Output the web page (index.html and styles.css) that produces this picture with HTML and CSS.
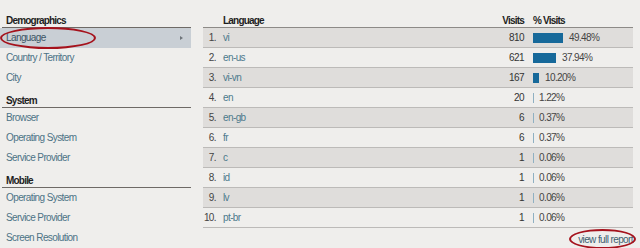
FILE: index.html
```html
<!DOCTYPE html>
<html lang="en">
<head>
  <meta charset="UTF-8">
  <meta name="viewport" content="width=device-width, initial-scale=1.0">
  <title>Audience Technology</title>
  <link rel="stylesheet" href="styles.css">
</head>
<body>
  <div class="page">
    <div class="sidebar">
      <div class="group-title">Demographics</div>
      <div class="nav-item active">
        Language
        <span class="arrow"></span>
        <span class="circle circle-nav"></span>
      </div>
      <div class="nav-item">Country / Territory</div>
      <div class="nav-item">City</div>

      <div class="group-title">System</div>
      <div class="nav-item">Browser</div>
      <div class="nav-item">Operating System</div>
      <div class="nav-item">Service Provider</div>

      <div class="group-title">Mobile</div>
      <div class="nav-item">Operating System</div>
      <div class="nav-item">Service Provider</div>
      <div class="nav-item">Screen Resolution</div>
    </div>

    <div class="report">
      <div class="row head">
        <span class="num"></span>
        <span class="lang">Language</span>
        <span class="visits">Visits</span>
        <span class="pct">% Visits</span>
      </div>
      <div class="row">
        <span class="num">1.</span><span class="lang">vi</span><span class="visits">810</span>
        <span class="pct"><span class="bar" style="width: 30px"></span>49.48%</span>
      </div>
      <div class="row">
        <span class="num">2.</span><span class="lang">en-us</span><span class="visits">621</span>
        <span class="pct"><span class="bar" style="width: 23px"></span>37.94%</span>
      </div>
      <div class="row">
        <span class="num">3.</span><span class="lang">vi-vn</span><span class="visits">167</span>
        <span class="pct"><span class="bar" style="width: 6px"></span>10.20%</span>
      </div>
      <div class="row">
        <span class="num">4.</span><span class="lang">en</span><span class="visits">20</span>
        <span class="pct"><span class="bar thin"></span>1.22%</span>
      </div>
      <div class="row">
        <span class="num">5.</span><span class="lang">en-gb</span><span class="visits">6</span>
        <span class="pct"><span class="bar thin"></span>0.37%</span>
      </div>
      <div class="row">
        <span class="num">6.</span><span class="lang">fr</span><span class="visits">6</span>
        <span class="pct"><span class="bar thin"></span>0.37%</span>
      </div>
      <div class="row">
        <span class="num">7.</span><span class="lang">c</span><span class="visits">1</span>
        <span class="pct"><span class="bar thin"></span>0.06%</span>
      </div>
      <div class="row">
        <span class="num">8.</span><span class="lang">id</span><span class="visits">1</span>
        <span class="pct"><span class="bar thin"></span>0.06%</span>
      </div>
      <div class="row">
        <span class="num">9.</span><span class="lang">lv</span><span class="visits">1</span>
        <span class="pct"><span class="bar thin"></span>0.06%</span>
      </div>
      <div class="row">
        <span class="num">10.</span><span class="lang">pt-br</span><span class="visits">1</span>
        <span class="pct"><span class="bar thin"></span>0.06%</span>
      </div>

      <div class="report-footer">
        <span class="full-link">
          view full report
          <span class="circle circle-link"></span>
        </span>
      </div>
    </div>
  </div>
</body>
</html>
```

FILE: styles.css
```css
body {
  margin: 0;
  background-color: #efeeec;
  font-family: 'Liberation Sans', Arial, sans-serif;
  font-size: 10px;
  letter-spacing: -0.6px;
  color: #333;
}

.page {
  display: flex;
  padding-top: 8px;
}

.sidebar {
  width: 191px;
  flex-shrink: 0;
}

.group-title {
  margin-left: 2px;
  padding: 6px 0 0 4px;
  line-height: 13px;
  font-weight: bold;
  letter-spacing: -0.8px;
  color: #1e1e1e;
  border-bottom: 1px solid #6e6a66;
}

.nav-item {
  position: relative;
  height: 20px;
  line-height: 20px;
  padding-left: 6px;
  color: #4d7386;
}

.nav-item.active {
  background-color: #c9cfd5;
  color: #3b5566;
}

.arrow {
  position: absolute;
  left: 180px;
  top: 8px;
  border-left: 3px solid #6d747a;
  border-top: 2.5px solid transparent;
  border-bottom: 2.5px solid transparent;
}

.circle {
  position: absolute;
  border: 2px solid #a5121c;
  border-radius: 50%;
}

.circle-nav {
  left: 0;
  top: -1px;
  width: 92px;
  height: 18px;
}

.report {
  margin-left: 12px;
  width: 430px;
}

.row {
  display: flex;
  height: 19px;
  line-height: 19px;
  border-bottom: 1px solid #bcbab8;
}

.row:nth-child(even) {
  background-color: #dfdddb;
}

.row.head {
  height: 13px;
  padding-top: 6px;
  line-height: 13px;
  font-weight: bold;
  letter-spacing: -0.8px;
  color: #1e1e1e;
  border-bottom-color: #8d8a87;
}

.num {
  width: 13px;
  text-align: right;
  color: #444;
}

.lang {
  flex: 1;
  padding-left: 7px;
  color: #4d7a8c;
}

.head .lang {
  color: #1e1e1e;
}

.visits {
  width: 44px;
  text-align: right;
}

.pct {
  width: 100px;
  padding-left: 9px;
  display: flex;
  align-items: center;
  color: #444;
}

.head .pct {
  color: #1e1e1e;
}

.bar {
  display: inline-block;
  height: 10px;
  margin-right: 6px;
  background-color: #17699a;
}

.bar.thin {
  width: 1px;
  background-color: #8fb0c2;
  margin-right: 5px;
}

.report-footer {
  display: flex;
  justify-content: flex-end;
  padding-top: 5px;
  line-height: 13px;
}

.full-link {
  position: relative;
  color: #3f5f70;
}

.circle-link {
  left: -9px;
  right: -3px;
  top: -4px;
  height: 16px;
}
```
